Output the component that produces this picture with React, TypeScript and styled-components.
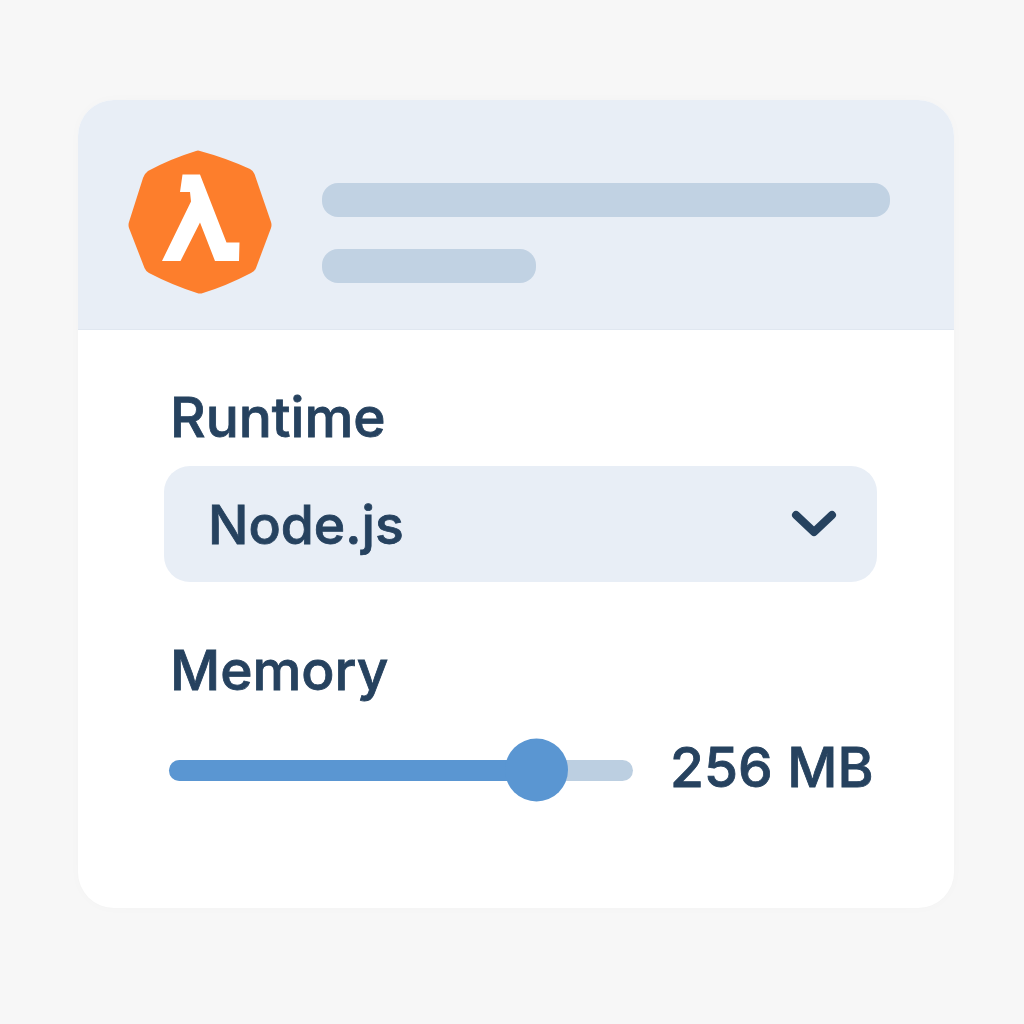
import React from 'react';
import styled, { createGlobalStyle } from 'styled-components';

const GlobalStyle = createGlobalStyle`
  html, body {
    margin: 0;
    padding: 0;
    background: #f7f7f7;
  }
`;

const App = () => {
  return (
    <>
      <GlobalStyle />
      <Page>
        <Card>
          <Header>
            <LogoWrap>
              <svg width="144" height="144" viewBox="128 150 144 144">
                <path
                  fill="#fd7e2c"
                  d="M196 151 Q198 150 200 151 Q226 158 250 169 Q253 170.500 254.500 174 L271 222 Q272 225 271 228 L256 268 Q254.500 271.500 251 273 Q226 286 203 293 Q200 294 197 293 Q172 285 149 273 Q146 271.500 144.500 268 L129 228 Q128 225 129 222 L143 178 Q144 174 148 171 Q170 159 196 151 Z"
                />
                <polygon
                  fill="#ffffff"
                  points="182.500,174.500 200,174.500 226.500,242.500 239.500,242.500 239,261 215,261 200,222.500 180.500,261 162,261 191,201.500 190,192 180,192"
                />
              </svg>
            </LogoWrap>
            <Bars>
              <Bar $width={568} />
              <Bar $width={214} />
            </Bars>
          </Header>
          <Body>
            <Label>Runtime</Label>
            <Select>
              <span>Node.js</span>
              <svg width="46" height="30" viewBox="0 0 46 30" fill="none">
                <path
                  d="M5 6 L23 23 L41 6"
                  stroke="#26425f"
                  strokeWidth="8"
                  strokeLinecap="round"
                  strokeLinejoin="round"
                />
              </svg>
            </Select>
            <MemoryLabel>Memory</MemoryLabel>
            <SliderRow>
              <Track>
                <Fill />
                <Thumb />
              </Track>
              <Value>256 MB</Value>
            </SliderRow>
          </Body>
        </Card>
      </Page>
    </>
  );
};

const Page = styled.div`
  width: 1024px;
  height: 1024px;
  padding-top: 100px;
  box-sizing: border-box;
  display: flex;
  justify-content: center;
  align-items: flex-start;
  font-family: Inter, 'Liberation Sans', sans-serif;
  color: #26425f;
  -webkit-text-stroke: 0.8px #26425f;
`;

const Card = styled.div`
  width: 876px;
  height: 808px;
  margin-left: 8px;
  border-radius: 36px;
  overflow: hidden;
  background: #ffffff;
  box-shadow: 0 0 12px rgba(40, 60, 90, 0.02);
`;

const Header = styled.div`
  height: 230px;
  box-sizing: border-box;
  padding: 50px 64px 0 50px;
  display: flex;
  align-items: flex-start;
  gap: 50px;
  background: #e8eef6;
  border-bottom: 1px solid #e0e7f0;
`;

const LogoWrap = styled.div`
  width: 144px;
  height: 144px;
  flex: none;
  svg {
    display: block;
  }
`;

const Bars = styled.div`
  display: flex;
  flex-direction: column;
  gap: 32px;
  padding-top: 33px;
`;

const Bar = styled.div<{ $width: number }>`
  width: ${({ $width }) => $width}px;
  height: 34px;
  border-radius: 16px;
  background: #c1d2e3;
`;

const Body = styled.div`
  padding: 57px 0 0 86px;
`;

const Label = styled.div`
  margin-left: 6px;
  font-size: 55px;
  line-height: 60px;
  font-weight: 500;
`;

const MemoryLabel = styled(Label)`
  margin-top: 58px;
`;

const Select = styled.div`
  width: 713px;
  height: 116px;
  margin-top: 19px;
  box-sizing: border-box;
  padding: 0 40px 0 44px;
  display: flex;
  align-items: center;
  justify-content: space-between;
  border-radius: 26px;
  background: #e8eef6;
  font-size: 53.5px;
  font-weight: 500;
  svg {
    display: block;
  }
`;

const SliderRow = styled.div`
  margin: 38px 0 0 5px;
  height: 64px;
  display: flex;
  align-items: center;
  gap: 37px;
`;

const Track = styled.div`
  position: relative;
  width: 464px;
  height: 21px;
  border-radius: 11px;
  background: #bccfe1;
`;

const Fill = styled.div`
  width: 368px;
  height: 100%;
  border-radius: 11px;
  background: #5a96d2;
`;

const Thumb = styled.div`
  position: absolute;
  top: 50%;
  left: 336px;
  width: 63px;
  height: 63px;
  transform: translateY(-50%);
  border-radius: 50%;
  background: #5a96d2;
`;

const Value = styled.div`
  margin-bottom: 6px;
  font-size: 55px;
  font-weight: 500;
  white-space: nowrap;
`;

export default App;
